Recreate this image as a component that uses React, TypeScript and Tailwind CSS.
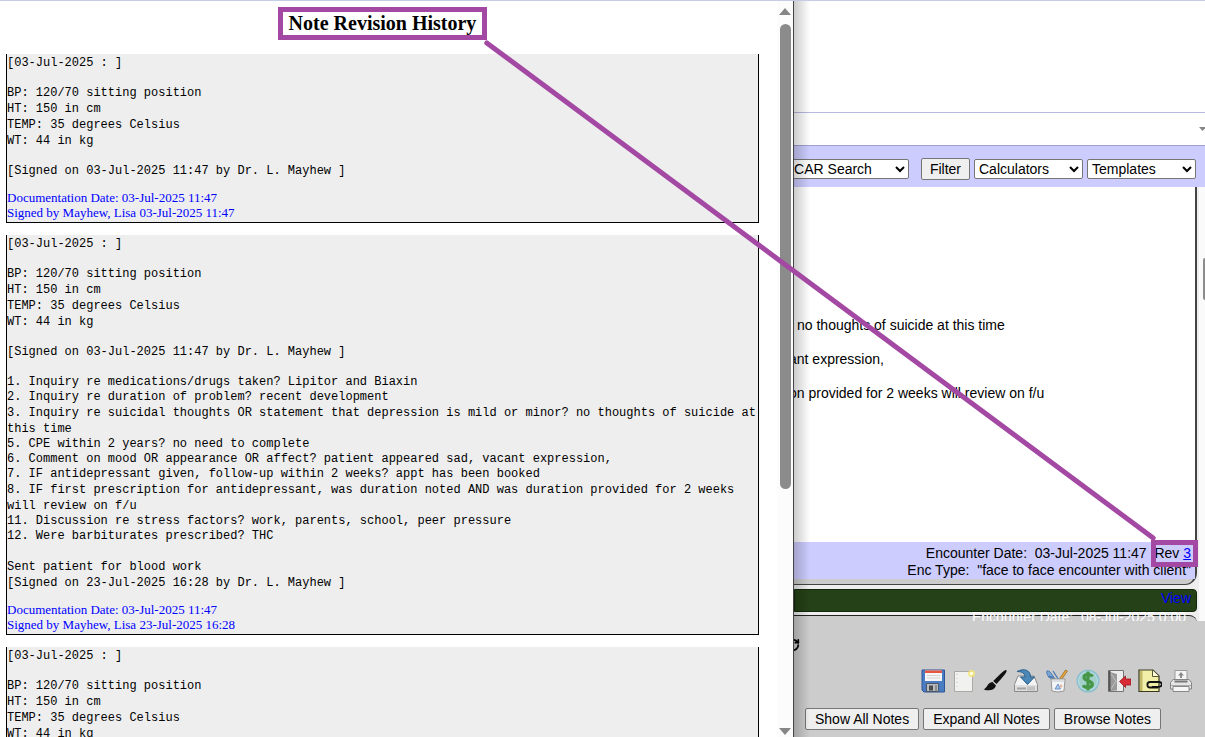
import type { ReactNode } from "react";
import clsx from "clsx";
import { RotateCw } from "lucide-react";

const vitals = [
  "BP: 120/70 sitting position",
  "HT: 150 in cm",
  "TEMP: 35 degrees Celsius",
  "WT: 44 in kg",
];

const answers = [
  { text: "1. Inquiry re medications/drugs taken? Lipitor and Biaxin" },
  { text: "2. Inquiry re duration of problem? recent development" },
  {
    text: "3. Inquiry re suicidal thoughts OR statement that depression is mild or minor? no thoughts of suicide at this time",
    long: true,
  },
  { text: "5. CPE within 2 years? no need to complete" },
  {
    text: "6. Comment on mood OR appearance OR affect? patient appeared sad, vacant expression,",
  },
  {
    text: "7. IF antidepressant given, follow-up within 2 weeks? appt has been booked",
  },
  {
    text: "8. IF first prescription for antidepressant, was duration noted AND was duration provided for 2 weeks will review on f/u",
    long: true,
  },
  {
    text: "11. Discussion re stress factors? work, parents, school, peer pressure",
  },
  { text: "12. Were barbiturates prescribed? THC" },
];

const Revision = ({
  signed,
  children,
}: {
  signed: string;
  children?: ReactNode;
}) => {
  return (
    <article className="border-x border-b border-black bg-[#eeeeee] pt-px pb-[2px]">
      <div className="flex flex-col gap-[14px] font-['Liberation_Mono',monospace] text-xs/4">
        <p>[03-Jul-2025 : ]</p>
        <div>
          {vitals.map((line) => (
            <p key={line}>{line}</p>
          ))}
        </div>
        <p>[Signed on 03-Jul-2025 11:47 by Dr. L. Mayhew ]</p>
        {children}
      </div>
      <div className="mt-[11px] font-['Liberation_Serif',serif] text-[13px]/[15px] text-[#0000ff]">
        <p>Documentation Date: 03-Jul-2025 11:47</p>
        <p>Signed by Mayhew, Lisa {signed}</p>
      </div>
    </article>
  );
};

const Triangle = ({ down }: { down?: boolean }) => (
  <svg viewBox="0 0 12 7" className="h-[7px] w-3 shrink-0 fill-[#868686]">
    <path d={down ? "M0 0H12L6 7Z" : "M0 7H12L6 0Z"} />
  </svg>
);

const HistoryWindow = () => {
  return (
    <section className="flex min-w-0 overflow-hidden border-r border-[#444444] bg-white">
      <div className="min-w-0 flex-1 overflow-hidden pr-[18px] pl-[6px]">
        <header className="flex justify-center pt-[6px] pb-[14px]">
          <h1 className="border-[5px] border-[#a349a4] px-[6px] font-['Liberation_Serif',serif] text-xl/[23px] font-bold">
            Note Revision History
          </h1>
        </header>
        <div className="flex flex-col gap-3">
          <Revision signed="03-Jul-2025 11:47" />
          <Revision signed="23-Jul-2025 16:28">
            <ul className="py-px">
              {answers.map(({ text, long }) => (
                <li
                  key={text}
                  className={clsx(long ? "leading-4" : "leading-[15px]")}
                >
                  {text}
                </li>
              ))}
            </ul>
            <div>
              <p>Sent patient for blood work</p>
              <p>[Signed on 23-Jul-2025 16:28 by Dr. L. Mayhew ]</p>
            </div>
          </Revision>
          <Revision signed="23-Jul-2025 16:28" />
        </div>
      </div>
      <div className="flex w-4 shrink-0 flex-col items-center bg-[#fcfcfc] pt-[7px] pb-[2px]">
        <Triangle />
        <div className="mt-[9px] h-[64%] w-[11px] rounded-full bg-[#8b8b8b]" />
        <div className="flex-1" />
        <Triangle down />
      </div>
    </section>
  );
};

const selectClass =
  "h-5 shrink-0 rounded-xs border border-[#767676] bg-white text-sm";
const buttonClass =
  "h-[22px] shrink-0 rounded-xs border border-[#767676] bg-[#efefef] text-sm/5";

const Toolbar = () => {
  return (
    <div className="flex h-[42px] items-center justify-end gap-1 border-t border-[#a0a0d0] bg-[#ccccff] pt-1 pr-[9px]">
      <select aria-label="Search" className={clsx(selectClass, "mr-2 w-[140px]")}>
        <option>OSCAR Search</option>
      </select>
      <button className={clsx(buttonClass, "px-2")}>Filter</button>
      <select aria-label="Calculators" className={clsx(selectClass, "w-[109px]")}>
        <option>Calculators</option>
      </select>
      <select aria-label="Templates" className={clsx(selectClass, "w-[109px]")}>
        <option>Templates</option>
      </select>
    </div>
  );
};

const Notes = () => {
  return (
    <div className="flex min-h-0 flex-1 bg-[#eeeeee]">
      <div className="flex min-w-0 flex-1 flex-col">
        <div className="flex min-h-0 flex-1 flex-col rounded-br-xl border-r-2 border-b border-[#444444] bg-[#cccccc] pb-[5px]">
          <div className="flex-1 bg-white pt-[121px] text-sm/[34px] whitespace-nowrap">
            <p className="pl-[3px]">no thoughts of suicide at this time</p>
            <p className="-ml-[5px]">ant expression,</p>
            <p className="-ml-[5px]">on provided for 2 weeks will review on f/u</p>
          </div>
          <div className="bg-[#ccccff] pt-[3px] pr-1 text-right text-sm/[17px] whitespace-pre">
            <p>
              Encounter Date:{"  "}03-Jul-2025 11:47{"  "}
              <span className="relative">
                Rev{" "}
                <a href="#rev" className="text-[#0000ff] underline">
                  3
                </a>
                <span className="absolute -top-[5px] -right-[7px] -left-[3px] z-10 h-[27px] border-[5px] border-[#a349a4]" />
              </span>
            </p>
            <p>Enc Type:{"  "}"face to face encounter with client"</p>
          </div>
        </div>
        <div className="mt-1 h-[23px] rounded-r-sm border border-[#14280c] bg-[#254117] pr-[5px] text-right text-sm/4">
          <a href="#view" className="text-[#0000ff]">
            View
          </a>
        </div>
        {/* next note, mostly hidden under the footer */}
        <div className="h-[9px] overflow-hidden pt-[3px] text-white">
          <div className="h-3 rounded-tr-lg border-t border-[#222222] bg-[#cccccc] pr-[11px]">
            <p className="-mt-[5px] text-right text-sm/3 whitespace-pre">
              Encounter Date:{"  "}08-Jul-2025 0:00
            </p>
          </div>
        </div>
      </div>
      <div className="ml-[2px] flex w-[6px] shrink-0 flex-col items-end overflow-hidden bg-[#fafafa] pt-[71px]">
        <div className="h-[42px] w-[2px] rounded-l-full bg-[#8b8b8b]" />
      </div>
    </div>
  );
};

const Icon = ({ label, children }: { label: string; children: ReactNode }) => (
  <button aria-label={label} className="size-6 shrink-0">
    <svg viewBox="0 0 24 24" fill="none" className="size-6">
      {children}
    </svg>
  </button>
);

const Actions = () => {
  return (
    <div className="flex justify-end gap-[7px] pr-3">
      <Icon label="Save">
        <path d="M1 1H23.500V23H3L1 21Z" fill="#4a7cc4" stroke="#2f5597" />
        <path d="M4 1.500H21V12H4Z" fill="#f5f5f5" />
        <path d="M4 1.500H21V4H4Z" fill="#e8563f" />
        <path d="M6 6.500H19M6 9H19" stroke="#d3d3d3" />
        <path d="M5.500 14.500H17.500V22.500H5.500Z" fill="#b9bdc2" stroke="#4b5563" />
        <path d="M8 16.500H12V21.500H8Z" fill="#4a4a4a" />
        <path d="M14 16H16V22H14Z" fill="#8b8e92" />
      </Icon>
      <Icon label="New note">
        <path d="M2.500 2.500H20.500V22.500H2.500Z" fill="#f1f1f0" stroke="#aaa9a6" />
        <path d="M5 5V21" stroke="#c4c4c4" strokeDasharray="1 3" />
        <circle cx="19.500" cy="4.500" r="3.500" fill="#f6e76a" opacity=".8" />
        <circle cx="19.500" cy="4.500" r="1.800" fill="#fffde0" />
      </Icon>
      <Icon label="Sign">
        <path
          d="M23.300 1.200C24.500 2.400 22 5.500 13.500 15L10.200 12C18.500 4 22 .3 23.300 1.200Z"
          fill="#111"
        />
        <path
          d="M9.500 13L13 16.500C11.500 21.500 5.500 22.500.500 20.200C4.500 19.500 4 13.500 9.500 13Z"
          fill="#111"
        />
      </Icon>
      <Icon label="Sign and save">
        <path
          d="M4 7H20L23.500 15.500V22.500H.500V15.500Z"
          fill="#f3f3f3"
          stroke="#8a8a8a"
        />
        <path d="M1 16H23V22H1Z" fill="#dedede" />
        <path d="M3 19.500H12" stroke="#a3a3a3" strokeWidth="2" />
        <path d="M14 17.500V21.500M16 17.500V21.500M18 17.500V21.500M20 17.500V21.500" stroke="#a4a4a4" />
        <path
          d="M3 2.500C10-1 16.500 1 16.500 8H20.500L13.500 15.500L6.500 8H11C11 4.500 8 2.500 3 2.500Z"
          fill="#4b88b8"
          stroke="#285f8c"
        />
      </Icon>
      <Icon label="Templates and tools">
        <path d="M20.500 1L22.500 2L15.500 12H13Z" fill="#e9a83b" stroke="#8c6420" strokeWidth=".7" />
        <path d="M2 2C4 1 6 4 8 7L11.500 12H8.500L4 8C2 6 1 3 2 2Z" fill="#7ba6d6" stroke="#406aa2" strokeWidth=".8" />
        <path d="M8 2L14.500 12M3 8C6 6 8 9 11 12" stroke="#4a78b2" strokeWidth="1.300" />
        <path
          d="M6 10H20L19 22Q13 24 7 22Z"
          fill="#f2f4f6"
          stroke="#989898"
        />
        <path d="M6.500 12H19.500" stroke="#c4c7cb" />
        <path d="M10 20L13 15L15.500 20Z" fill="#a9c9eb" stroke="#5a82c0" strokeWidth=".8" />
        <circle cx="16" cy="17" r="1.500" fill="#e5b7a2" />
      </Icon>
      <Icon label="Sign, save and bill">
        <circle cx="12" cy="12" r="11.500" fill="#8cc0ce" />
        <circle cx="12" cy="12" r="9.500" fill="#a3d0cb" stroke="#bde0e8" />
        <path
          d="M16.500 7.500C15 5.200 8 4.700 8 8.500C8 12.500 16.500 11 16.300 15.300C16 19.500 8.500 19 7.200 16.300M12 2.500V21.500"
          stroke="#459647"
          strokeWidth="3.200"
        />
      </Icon>
      <Icon label="Exit">
        <path d="M1.500 1.500H16.500V22.500H1.500Z" fill="#ececec" stroke="#737373" />
        <path d="M3 3L10 5V21.500L3 22Z" fill="#9a9a9a" />
        <path d="M4 5L9 12L4 20" stroke="#c4c4c4" />
        <path d="M2.500 2V22" stroke="#555" strokeWidth="2" />
        <path
          d="M12.500 12.500L18.500 7V10H24V16H18.500V18.500Z"
          fill="#d92b35"
          stroke="#9b1720"
          strokeWidth=".8"
        />
      </Icon>
      <Icon label="Attach document">
        <path
          d="M1 1H15L21 7V22.500H1Z"
          fill="#f2f0a8"
          stroke="#383821"
          strokeWidth="1.200"
        />
        <path d="M2 2H4.500V22H2Z" fill="#c2b968" />
        <path d="M14.500 1V7.500H21" fill="#fbfbdc" stroke="#55552e" />
        <path
          d="M20 18.500H12C8.500 18.500 8.500 13 12 13H21C25 13 24.500 17.800 21 17.800H14"
          stroke="#111"
          strokeWidth="1.800"
        />
      </Icon>
      <Icon label="Print">
        <path d="M6 1.500H18V12H6Z" fill="#f5f5f5" stroke="#9b9b9b" />
        <path d="M12 3L15 6.500H13V9H11V6.500H9Z" fill="#8b8b8b" />
        <path
          d="M4 10.500H20L22.500 13.500V20H1.500V13.500Z"
          fill="#e4e4e4"
          stroke="#858585"
        />
        <path d="M5.500 12.500H18.500" stroke="#777" strokeWidth="2" />
        <path d="M4 17.500H20V22.500H4Z" fill="#f6f6f6" stroke="#888" />
        <path d="M2 16.500H22" stroke="#aaa" />
      </Icon>
    </div>
  );
};

const ChartPage = () => {
  return (
    <section className="relative flex min-w-0 flex-col overflow-hidden bg-white font-['Liberation_Sans',sans-serif]">
      <div className="h-28 border-b border-[#b8b8e0]" />
      <div className="flex h-8 items-center justify-end">
        <svg viewBox="0 0 7 4" className="-mr-px h-1 w-[7px] fill-[#868686]">
          <path d="M0 0H7L3.500 4Z" />
        </svg>
      </div>
      <Toolbar />
      <Notes />
      <footer className="bg-[#cccccc] pb-[7px]">
        <div className="flex h-12 items-center">
          <RotateCw size={14} strokeWidth={3} className="-ml-2" />
        </div>
        <Actions />
        <div className="mt-[15px] flex gap-1 pl-[11px]">
          <button className={clsx(buttonClass, "px-[9px]")}>Show All Notes</button>
          <button className={clsx(buttonClass, "px-[9px]")}>Expand All Notes</button>
          <button className={clsx(buttonClass, "px-[9px]")}>Browse Notes</button>
        </div>
      </footer>
      <div className="pointer-events-none absolute inset-y-0 left-0 w-4 bg-gradient-to-r from-black/20 to-transparent" />
    </section>
  );
};

const App = () => {
  return (
    <main className="relative grid h-screen grid-cols-[794fr_411fr] grid-rows-[100%] overflow-hidden border-t border-[#c3cde4] text-black">
      <HistoryWindow />
      <ChartPage />
      <svg className="pointer-events-none absolute inset-0 h-full w-full">
        <line
          x1="40.400%"
          y1="42"
          x2="95.700%"
          y2="537"
          stroke="#a349a4"
          strokeWidth="5"
          strokeLinecap="round"
        />
      </svg>
    </main>
  );
};

export default App;
